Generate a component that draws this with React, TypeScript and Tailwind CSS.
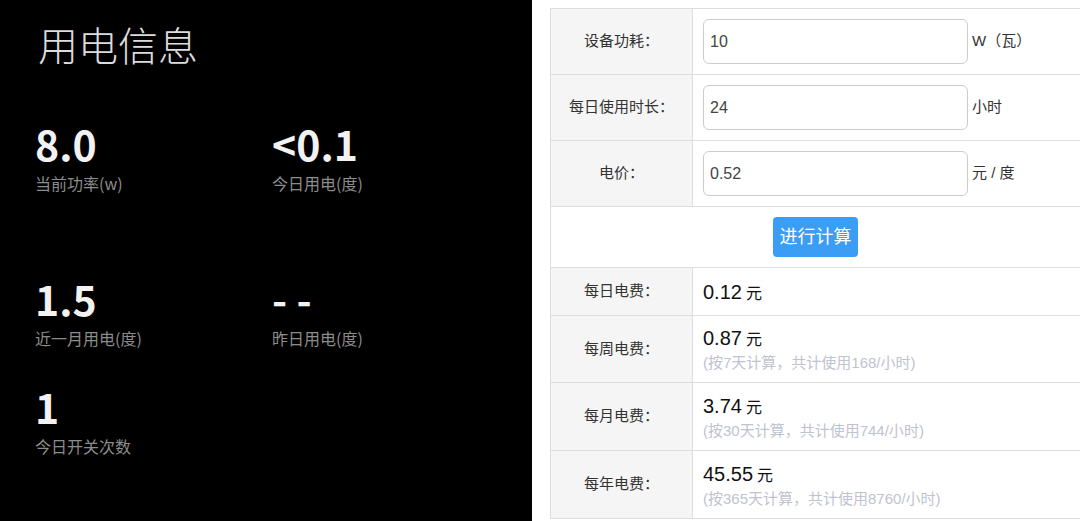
import React from 'react'

const cjk = { fontFamily: '"Noto Sans CJK SC", "Noto Sans", sans-serif' }
const web = { fontFamily: '"Liberation Sans", Arial, "Noto Sans CJK SC", sans-serif' }

function Stat({ value, label }: { value: string; label: string }) {
  return (
    <div>
      <div className="text-[41px] font-bold leading-[42px] text-[#f2f2f2]">{value}</div>
      <div className="mt-[11px] text-[16px] leading-[17px] text-[#8c8c8c]">{label}</div>
    </div>
  )
}

function InputRow({ label, value, unit }: { label: string; value: string; unit: string }) {
  return (
    <div className="flex h-[66px] border-b border-[#dedede]">
      <div className="flex w-[142px] shrink-0 items-center justify-center border-r border-[#dedede] bg-[#f5f5f5] text-[15px] text-[#333]">
        {label}
      </div>
      <div className="flex flex-1 items-center pl-[10px]">
        <div className="flex h-[45px] w-[265px] items-center rounded-[6px] border border-[#ccc] bg-white px-[6px] text-[16px] text-[#444]">
          {value}
        </div>
        <span className="ml-[4px] text-[15px] text-[#333]">{unit}</span>
      </div>
    </div>
  )
}

function ResultRow({ label, value, note, h }: { label: string; value: string; note?: string; h: string }) {
  return (
    <div className={`flex ${h} border-b border-[#dedede] last:border-b-0`}>
      <div className="flex w-[142px] shrink-0 items-center justify-center border-r border-[#dedede] bg-[#f5f5f5] text-[15px] text-[#333]">
        {label}
      </div>
      <div className="flex flex-1 flex-col justify-center pl-[10px]">
        <div className="leading-none text-[#111]">
          <span className="text-[20px]">{value}</span>
          <span className="ml-[4px] text-[16px]">元</span>
        </div>
        {note && <div className="mt-[7px] text-[15px] leading-none text-[#bfc3d1]">{note}</div>}
      </div>
    </div>
  )
}

export default function App() {
  return (
    <div className="flex h-[521px] w-[1080px] overflow-hidden bg-white">
      {/* 左侧用电信息 */}
      <div className="h-[521px] w-[532px] shrink-0 bg-black pl-[35px] pt-[18px]" style={cjk}>
        <h1 className="pl-[3px] text-[40px] font-light leading-[52px] text-[#dcdcdc]">用电信息</h1>
        <div className="mt-[52px] grid grid-cols-[237px_1fr]">
          <Stat value="8.0" label="当前功率(w)" />
          <Stat value="<0.1" label="今日用电(度)" />
        </div>
        <div className="mt-[85px] grid grid-cols-[237px_1fr]">
          <Stat value="1.5" label="近一月用电(度)" />
          <Stat value="- -" label="昨日用电(度)" />
        </div>
        <div className="mt-[38px] grid grid-cols-[237px_1fr]">
          <Stat value="1" label="今日开关次数" />
        </div>
      </div>

      {/* 右侧电费计算 */}
      <div className="ml-[18px] mt-[8px] h-[511px] flex-1 border border-r-0 border-[#dedede]" style={web}>
        <InputRow label="设备功耗：" value="10" unit="W（瓦）" />
        <InputRow label="每日使用时长：" value="24" unit="小时" />
        <InputRow label="电价：" value="0.52" unit="元 / 度" />
        <div className="flex h-[61px] items-center justify-center border-b border-[#dedede]">
          <button className="h-[40px] w-[85px] rounded-[4px] bg-[#3c9df5] text-[18px] text-white">进行计算</button>
        </div>
        <ResultRow h="h-[48px]" label="每日电费：" value="0.12" />
        <ResultRow h="h-[67px]" label="每周电费：" value="0.87" note="(按7天计算，共计使用168/小时)" />
        <ResultRow h="h-[68px]" label="每月电费：" value="3.74" note="(按30天计算，共计使用744/小时)" />
        <ResultRow h="h-[67px]" label="每年电费：" value="45.55" note="(按365天计算，共计使用8760/小时)" />
      </div>
    </div>
  )
}
